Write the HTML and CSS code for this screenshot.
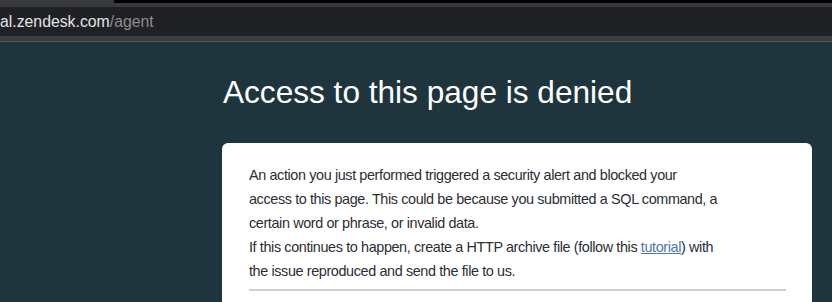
FILE: index.html
```html
<!DOCTYPE html>
<html lang="en">
<head>
<meta charset="utf-8">
<title>Access denied</title>
<link rel="stylesheet" href="styles.css">
</head>
<body>
<div class="chrome">
  <div class="tabstrip">
    <div class="tab"></div>
    <div class="tabrest"></div>
  </div>
  <div class="addressbar">
    <span class="host">al.zendesk.com</span><span class="path">/agent</span>
  </div>
  <div class="toolbar-bottom"></div>
</div>
<main class="page">
  <h1 class="title">Access to this page is denied</h1>
  <section class="card">
    <p class="msg">An action you just performed triggered a security alert and blocked your access to this page. This could be because you submitted a SQL command, a certain word or phrase, or invalid data.<br>If this continues to happen, create a HTTP archive file (follow this <a href="#" class="link">tutorial</a>) with the issue reproduced and send the file to us.</p>
    <hr class="rule">
    <p class="ref">Reference ID: 7f3a9c21</p>
  </section>
</main>
</body>
</html>
```
FILE: styles.css
```css
* { box-sizing: border-box; }
html, body { margin: 0; padding: 0; }
body {
  background: #1f353d;
  font-family: "Liberation Sans", Arial, sans-serif;
  overflow: hidden;
  height: 302px;
}
.chrome { display: flex; flex-direction: column; }
.tabstrip { display: flex; height: 7px; }
.tab { width: 114px; background: #38393b; }
.tabrest {
  flex: 1;
  background: #38393b;
  border-top: 3px solid #000;
}
.addressbar {
  height: 29px;
  background: #202124;
  display: flex;
  align-items: center;
  font-size: 15.8px;
  padding-top: 1px;
}
.host { color: #e4e4e4; }
.path { color: #8b8c8e; }
.toolbar-bottom {
  height: 6px;
  background: #3b3c3e;
  border-bottom: 1px solid #56585a;
}
.page {
  padding-left: 222px;
  padding-right: 20px;
}
.title {
  margin: 32px 0 0 1px;
  font-weight: 300;
  font-size: 31.6px;
  line-height: 36px;
  color: #ffffff;
}
.card {
  margin-top: 33px;
  width: 590px;
  background: #ffffff;
  border-radius: 6px;
  padding: 20px 26px 20px 27px;
}
.msg {
  margin: 0;
  max-width: 470px;
  font-size: 14.4px;
  letter-spacing: -0.38px;
  line-height: 24px;
  color: #2b2e33;
}
.link { color: #4c78ad; text-decoration: underline; }
.rule {
  margin: 6px 0 0 0;
  border: 0;
  height: 2px;
  background: #cfcfcf;
}
.ref {
  margin: 8px 0 0;
  font-size: 13px;
  line-height: 16px;
  color: #d6d6d6;
}
```
